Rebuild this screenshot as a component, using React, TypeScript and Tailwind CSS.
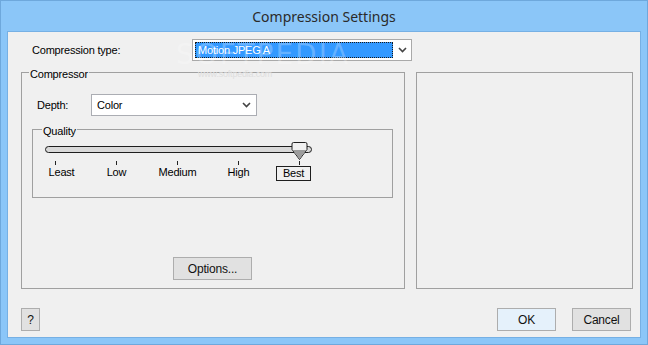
const font = "font-['Liberation_Sans',Arial,sans-serif]";

const Chevron = () => (
  <svg width="9" height="6" viewBox="0 0 9 6" className="text-[#444]">
    <polyline points="1,1 4.5,4.5 8,1" fill="none" stroke="currentColor" strokeWidth="1.6" />
  </svg>
);

const Button = ({ label, className = "" }: { label: string; className?: string }) => (
  <button
    className={`h-[23px] flex items-center justify-center bg-[#e1e1e1] border border-[#adadad] text-[12px] text-[#111] ${className}`}
  >
    {label}
  </button>
);

const ticks = ["Least", "Low", "Medium", "High", "Best"];

const SliderThumb = () => (
  <svg width="17" height="19" viewBox="0 0 17 19">
    <path
      d="M2.5,0.5 H14.5 Q16,0.5 16,2 V7.5 L8.5,17.5 L1,7.5 V2 Q1,0.5 2.5,0.5 Z"
      fill="#f0f0f0"
      stroke="#1e1e1e"
      strokeWidth="1"
    />
    <path d="M1.5,8 H15.5 L8.5,16.8 Z" fill="#9c9c9c" />
  </svg>
);

export default function App() {
  return (
    <div className={`w-[648px] h-[345px] bg-[#8bc6f8] border border-[#6ea8dc] flex flex-col overflow-hidden ${font}`}>
      {/* title bar */}
      <div className="h-[30px] flex items-center justify-center text-[14px] text-[#2a2a2a] font-['Noto_Sans',sans-serif]">
        Compression Settings
      </div>

      {/* client area */}
      <div className="relative mx-[6px] h-[307px] bg-[#f0f0f0] border border-[#76b0e4] flex flex-col text-[11px] text-black tracking-[-0.2px]">
        {/* row: compression type */}
        <div className="mt-[7px] h-[22px] flex items-center">
          <span className="ml-[24px] w-[160px]">Compression type:</span>
          <div className="w-[220px] h-[22px] bg-white border border-[#a9a9a9] flex items-center pl-[2px] pr-[4px]">
            <div className="w-[198px] h-[16px] bg-[#3399ff] border border-dotted border-[#1a1a1a] text-white text-[11px] flex items-center pl-[2px] leading-none">
              Motion JPEG A
            </div>
            <div className="ml-auto">
              <Chevron />
            </div>
          </div>
        </div>

        {/* panels */}
        <div className="mt-[11px] ml-[13px] flex gap-[11px]">
          <div className="relative w-[384px] h-[217px] border border-[#a0a0a0] flex flex-col">
            <span className="absolute -top-[7px] left-[7px] bg-[#f0f0f0] px-[1px]">Compressor</span>

            <div className="mt-[21px] flex items-center">
              <span className="ml-[15px] w-[54px]">Depth:</span>
              <div className="w-[166px] h-[22px] bg-white border border-[#abadb3] flex items-center pl-[5px] pr-[5px]">
                Color
                <div className="ml-auto">
                  <Chevron />
                </div>
              </div>
            </div>

            {/* quality group */}
            <div className="relative mt-[13px] ml-[10px] w-[361px] h-[69px] border border-[#a0a0a0]">
              <span className="absolute -top-[7px] left-[9px] bg-[#f0f0f0] px-[1px]">Quality</span>

              <div className="relative mt-[16px] ml-[12px] w-[267px] h-[7px] rounded-full border border-[#1e1e1e] bg-[#d9d9d9]">
                <div className="absolute -top-[5px] left-[245px]">
                  <SliderThumb />
                </div>
              </div>

              <div className="mt-[8px] ml-[22px] w-[245px] flex justify-between">
                {ticks.map((t) => (
                  <div key={t} className="w-px flex flex-col items-center">
                    <div className="w-px h-[4px] bg-[#222]" />
                    <span
                      className={`mt-[1px] whitespace-nowrap leading-[13px] ${
                        t === "Best"
                          ? "relative -left-[6px] -mt-[1px] border border-[#1e1e1e] px-[6px]"
                          : t === "Least"
                          ? "relative left-[6px]"
                          : ""
                      }`}
                    >
                      {t}
                    </span>
                  </div>
                ))}
              </div>
            </div>

            <div className="mt-auto mb-[8px] ml-[151px]">
              <Button label="Options..." className="w-[79px]" />
            </div>
          </div>

          <div className="w-[217px] h-[217px] border border-[#a0a0a0]" />
        </div>

        {/* bottom buttons */}
        <div className="mt-auto mb-[6px] flex items-center">
          <Button label="?" className="ml-[13px] w-[19px] text-[#1e5fb4]" />
          <Button label="OK" className="ml-auto w-[59px] border-[#3c8fe0] bg-[#e5f1fb]" />
          <Button label="Cancel" className="ml-[16px] mr-[9px] w-[59px]" />
        </div>

        {/* watermark */}
        <span className="absolute left-[168px] top-[2px] text-[28px] tracking-[2px] text-white/25 pointer-events-none font-['DejaVu_Sans',sans-serif]">
          SOFTPEDIA
        </span>
        <span className="absolute left-[190px] top-[36px] text-[9px] text-[#dedede] pointer-events-none">
          www.softpedia.com
        </span>
      </div>
    </div>
  );
}
